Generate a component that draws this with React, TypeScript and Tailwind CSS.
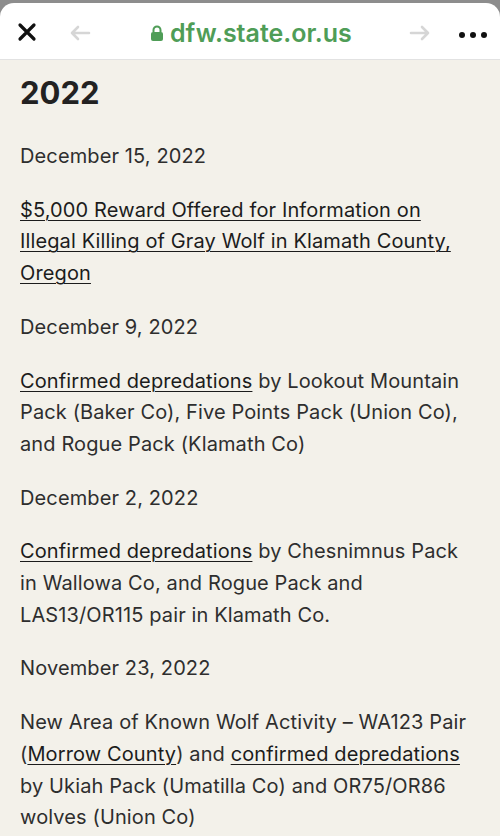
import React from "react";

const U = ({ children }: { children: React.ReactNode }) => (
  <a className="underline decoration-[1px] underline-offset-[3px] text-[#1c1c1c]">{children}</a>
);

export default function App() {
  return (
    <div className="w-[500px] h-[836px] overflow-hidden bg-[#8d8d8d] flex flex-col" style={{ fontFamily: "Inter, 'Noto Sans', sans-serif" }}>
      <div className="h-[3px] shrink-0" />
      <div className="bg-white rounded-t-[14px] h-[57px] shrink-0 flex items-center relative border-b border-[#e2e2e2]">
        <svg className="absolute left-[17px] top-[19px]" width="20" height="20" viewBox="0 0 20 20">
          <path d="M3 3 L17 17 M17 3 L3 17" stroke="#111" strokeWidth="3.2" strokeLinecap="round" />
        </svg>
        <svg className="absolute left-[69px] top-[22px]" width="22" height="16" viewBox="0 0 22 16">
          <path d="M20 8 H3 M9 2 L3 8 L9 14" stroke="#d6d6d6" strokeWidth="2.6" fill="none" strokeLinecap="round" strokeLinejoin="round" />
        </svg>
        <div className="absolute left-[150px] top-[13px] flex items-center gap-[6px]">
          <svg width="14" height="17" viewBox="0 0 14 17">
            <path d="M3.5 7 V5 a3.5 3.5 0 0 1 7 0 V7" stroke="#4f9d57" strokeWidth="2" fill="none" />
            <rect x="1" y="7" width="12" height="9" rx="2" fill="#4f9d57" />
          </svg>
          <span className="text-[25px] font-semibold text-[#4f9d57] tracking-[0px] leading-[34px]">dfw.state.or.us</span>
        </div>
        <svg className="absolute left-[409px] top-[22px]" width="22" height="16" viewBox="0 0 22 16">
          <path d="M2 8 H19 M13 2 L19 8 L13 14" stroke="#d6d6d6" strokeWidth="2.6" fill="none" strokeLinecap="round" strokeLinejoin="round" />
        </svg>
        <div className="absolute left-[459px] top-[29px] flex gap-[5px]">
          <span className="w-[6px] h-[6px] rounded-full bg-[#111]" />
          <span className="w-[6px] h-[6px] rounded-full bg-[#111]" />
          <span className="w-[6px] h-[6px] rounded-full bg-[#111]" />
        </div>
      </div>
      <div className="flex-1 bg-[#f3f1ea] px-[20px] pt-[13px] text-[20px] leading-[31.7px] tracking-[0.12px] text-[#2e2e2e] whitespace-nowrap">
        <h1 className="text-[31px] font-bold leading-[40px] text-[#222] tracking-[0px] mb-[28px]">2022</h1>
        <p>December 15, 2022</p>
        <p className="mt-[22px]">
          <U>$5,000 Reward Offered for Information on</U>
          <br />
          <U>Illegal Killing of Gray Wolf in Klamath County,</U>
          <br />
          <U>Oregon</U>
        </p>
        <p className="mt-[22px]">December 9, 2022</p>
        <p className="mt-[22px]">
          <U>Confirmed depredations</U> by Lookout Mountain
          <br />
          Pack (Baker Co), Five Points Pack (Union Co),
          <br />
          and Rogue Pack (Klamath Co)
        </p>
        <p className="mt-[22px]">December 2, 2022</p>
        <p className="mt-[22px]">
          <U>Confirmed depredations</U> by Chesnimnus Pack
          <br />
          in Wallowa Co, and Rogue Pack and
          <br />
          LAS13/OR115 pair in Klamath Co.
        </p>
        <p className="mt-[22px]">November 23, 2022</p>
        <p className="mt-[22px]">
          New Area of Known Wolf Activity – WA123 Pair
          <br />
          (<U>Morrow County</U>) and <U>confirmed depredations</U>
          <br />
          by Ukiah Pack (Umatilla Co) and OR75/OR86
          <br />
          wolves (Union Co)
        </p>
      </div>
    </div>
  );
}
